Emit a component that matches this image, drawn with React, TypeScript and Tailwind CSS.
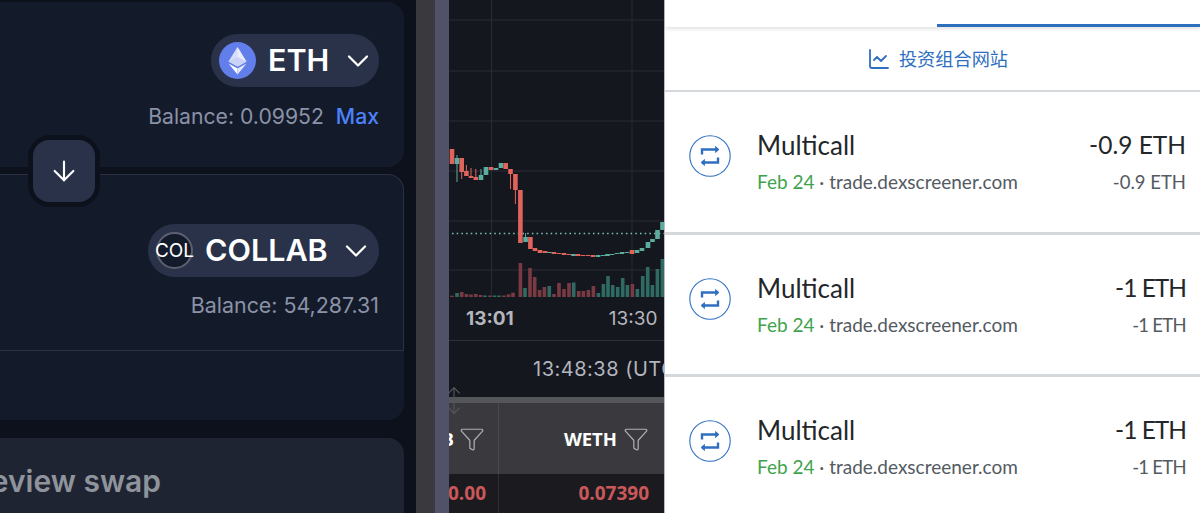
import React from 'react';
import { ArrowDown, ChevronDown, ChartLine, Filter, ArrowUp } from 'lucide-react';

// [x, bodyTop, bodyBottom, wickTop, wickBottom, up]
type Candle = [number, number, number, number | null, number | null, boolean];

const candles: Candle[] = [
  [3, 149, 164, null, null, false],
  [8, 158, 164, 155, 182, true],
  [12.7, 158, 172, null, 179, false],
  [17.4, 171, 176, 165, null, false],
  [22, 176, 178, 168, null, false],
  [26.8, 177, 180, 169, null, false],
  [32, 175, 180, 169, null, true],
  [37, 167, 175, null, null, true],
  [42, 167, 170, null, null, false],
  [47, 168, 170, null, null, true],
  [52, 163, 168, null, null, true],
  [56.7, 163, 169, null, null, false],
  [61.5, 169, 174, null, 189, false],
  [66.4, 174, 190, null, 204, false],
  [71.4, 190, 243, null, null, false],
  [76.6, 237, 242, 233, null, true],
  [81.4, 237, 249, null, null, false],
  [86, 248, 251, null, null, false],
  [91, 250, 253, null, null, false],
  [96, 251, 253, null, null, false],
  [100.5, 252, 253, null, null, true],
  [105, 252, 254, null, null, false],
  [110, 253, 254, null, null, false],
  [115, 253, 255, null, null, false],
  [120, 254, 255, null, null, false],
  [124.5, 254, 256, null, null, true],
  [129, 254, 256, null, null, false],
  [134, 255, 256, null, null, false],
  [139, 255, 256, null, null, false],
  [144, 255, 257, null, null, false],
  [149, 255, 257, null, null, true],
  [154, 255, 256, null, null, true],
  [158.5, 254, 256, null, null, true],
  [163, 254, 255, null, null, true],
  [168, 253, 254, null, null, true],
  [173, 252, 254, null, null, true],
  [178, 252, 253, null, null, true],
  [183, 250, 254, null, null, false],
  [188, 250, 253, null, null, true],
  [193, 248, 251, null, null, true],
  [199, 242, 248, null, null, true],
  [203.5, 239, 242, null, null, true],
  [208.5, 230, 239, null, null, true],
  [213.5, 222, 230, null, null, true],
];

// [x, height, up]
const volumes: [number, number, boolean][] = [
  [3, 1.3, false], [8, 4, true], [12.7, 5, false], [17.4, 3, false], [22, 2.5, false],
  [26.8, 3, false], [31.5, 2, false], [36, 1.5, true], [41, 1.5, false], [45.5, 1.5, true],
  [50, 1.5, true], [55, 1.5, false], [59.5, 2.7, false], [64, 4.3, false], [71.4, 34, false],
  [76, 9, true], [81, 29, false], [85.7, 20, false], [90.6, 7, false], [95.4, 10, false],
  [100.3, 11, true], [105, 3, false], [110, 14, false], [115, 8, false], [120, 14, false],
  [124.7, 14.5, true], [129.7, 6, false], [134.4, 6, false], [139.4, 7, false], [144.4, 11, false],
  [149.4, 4, true], [154.4, 13, true], [159, 21, true], [163.7, 12, true], [168.7, 10, true],
  [173.7, 19, true], [178.4, 12, true], [183.4, 13, false], [188.4, 8, true], [193.7, 21, true],
  [198.7, 30, true], [203.4, 12, true], [208.4, 28, true], [213.4, 38, true],
];

const rows = [
  { amount: '-0.9 ETH', big: 'tracking-normal', small: 'tracking-normal' },
  { amount: '-1 ETH', big: 'tracking-[-1px]', small: 'tracking-[-0.7px]' },
  { amount: '-1 ETH', big: 'tracking-[-1px]', small: 'tracking-[-0.7px]' },
];

const EthLogo = () => (
  <svg viewBox="0 0 37 37" className="w-[37px] h-[37px] shrink-0">
    <circle cx="18.5" cy="18.5" r="18.5" fill="#627EEA" />
    <polygon points="18.5,5 9.5,19.5 18.5,24.5 27.5,19.5" fill="#ffffff" fillOpacity="0.75" />
    <polygon points="18.5,5 18.5,24.5 27.5,19.5" fill="#ffffff" fillOpacity="0.45" />
    <polygon points="18.5,15 9.5,19.5 18.5,24.5 27.5,19.5" fill="#C9D2F7" />
    <polygon points="9.5,21.5 18.5,32.5 18.5,26.5" fill="#ffffff" />
    <polygon points="27.5,21.5 18.5,32.5 18.5,26.5" fill="#E4E8FB" />
  </svg>
);

const SwapIcon = () => (
  <svg viewBox="0 0 42 42" className="w-[42px] h-[42px] shrink-0" fill="none" stroke="#2F6FC0">
    <circle cx="21" cy="21" r="20.2" strokeWidth="1.1" />
    <path d="M13 19.5V14.5H29" strokeWidth="2.4" />
    <path d="M26.5 11.5L30 14.5L26.5 17.5Z" fill="#2F6FC0" strokeWidth="0.8" />
    <path d="M29 22.5V27.5H13" strokeWidth="2.4" />
    <path d="M15.5 24.5L12 27.5L15.5 30.5Z" fill="#2F6FC0" strokeWidth="0.8" />
  </svg>
);

const Chart = () => (
  <svg viewBox="0 0 215 300" className="block w-[215px] h-[300px] shrink-0">
    {[20, 71, 121, 171, 221, 270].map((y) => (
      <line key={y} x1="0" x2="215" y1={y} y2={y} stroke="#2A2B35" strokeWidth="1" />
    ))}
    {[42.5, 183].map((x) => (
      <line key={x} x1={x} x2={x} y1="0" y2="297" stroke="#2A2B35" strokeWidth="1" />
    ))}
    <line x1="3" x2="215" y1="233.5" y2="233.5" stroke="#7FC4B8" strokeWidth="1.4" strokeDasharray="1.5 3.2" />
    {volumes.map(([x, h, up]) => (
      <rect key={x} x={x - 1.8} y={297 - h} width="3.6" height={h} fill={up ? '#2F6B62' : '#7A3A42'} />
    ))}
    {candles.map(([x, top, bottom, wickTop, wickBottom, up]) => {
      const color = up ? '#5BAE9F' : '#E0645C';
      return (
        <g key={x}>
          {(wickTop !== null || wickBottom !== null) && (
            <line x1={x} x2={x} y1={wickTop ?? top} y2={wickBottom ?? bottom} stroke={color} strokeWidth="1" />
          )}
          <rect x={x - 2.3} y={top} width="4.6" height={bottom - top} fill={color} />
        </g>
      );
    })}
  </svg>
);

export default function App() {
  return (
    <div className="flex w-[1200px] h-[513px] overflow-hidden bg-white">
      {/* swap form */}
      <div className="w-[416px] h-full shrink-0 bg-[#0D111C] pt-[2px] pr-3 overflow-hidden relative font-['Inter',sans-serif]">
        <div className="h-[165px] rounded-r-2xl bg-[#131A2A] flex flex-col items-end pt-[32px] pr-[25px]">
          <div className="flex items-center w-[168px] h-[53px] rounded-full bg-[#293249] pl-2">
            <EthLogo />
            <span className="ml-3 text-[30.5px] leading-none font-semibold text-white">ETH</span>
            <ChevronDown className="ml-[11px] w-[36px] h-[36px] text-white" strokeWidth={1.5} />
          </div>
          <div className="mt-[16px] flex items-center text-[21.2px] leading-[26px] text-[#8B92A6]">
            <span>Balance: 0.09952</span>
            <span className="ml-3 font-medium text-[#4C82FB]">Max</span>
          </div>
        </div>

        <div className="mt-[7px] h-[246px] rounded-r-2xl bg-[#131A2A]">
          <div className="h-[177px] flex flex-col items-end pt-[49px] pr-[24px] border-t border-r border-b border-[#2B3144] rounded-tr-2xl">
            <div className="flex items-center w-[231px] h-[53px] rounded-full bg-[#293249] pl-2">
              <div className="relative w-[37px] h-[37px] shrink-0 rounded-full bg-[#131A2A] border-2 border-[#5D6070] flex items-center justify-center">
                <span className="text-[19px] leading-none text-white">COL</span>
              </div>
              <span className="ml-3 text-[30.5px] leading-none font-semibold text-white">COLLAB</span>
              <ChevronDown className="ml-[10px] w-[36px] h-[36px] text-white" strokeWidth={1.5} />
            </div>
            <div className="mt-[15px] text-[21.4px] leading-[26px] text-[#8B92A6]">Balance: 54,287.31</div>
          </div>
        </div>

        <div className="mt-[18px] h-[100px] rounded-r-2xl bg-[#1F2433] flex items-start justify-end pr-[243px] pt-[23px]">
          <span className="shrink-0 text-[30px] leading-[40px] font-semibold text-[#8F949C]">Preview swap</span>
        </div>

        {/* flip button */}
        <div className="absolute left-[28px] top-[135px] w-[72px] h-[72px] rounded-[22px] bg-[#0D111C] flex items-center justify-center">
          <div className="w-[62px] h-[62px] rounded-[16px] bg-[#293249] flex items-center justify-center">
            <ArrowDown className="w-[32px] h-[32px] text-white" strokeWidth={1.6} />
          </div>
        </div>
      </div>

      {/* window edge */}
      <div className="w-[19px] h-full shrink-0 bg-[#3A3A3E]" />
      <div className="w-[14px] h-full shrink-0 bg-[#4F5268]" />

      {/* dexscreener chart */}
      <div className="w-[215px] h-full shrink-0 bg-[#15171F] relative overflow-hidden flex flex-col font-['Inter',sans-serif]">
        <Chart />
        <div className="h-[41px] shrink-0 flex items-center pl-[17px] pb-[2px] gap-[95px] border-b border-[#2F3038] text-[#B4B6BC] text-[19px]">
          <span className="font-bold">13:01</span>
          <span>13:30</span>
        </div>
        <div className="h-[56px] shrink-0 flex items-center pl-[84px] whitespace-nowrap text-[20px] tracking-[0.5px] text-[#B2B5BE]">
          13:48:38 (UTC
        </div>
        <div className="h-[6px] shrink-0 bg-[#55565A]" />
        <div className="h-[71px] shrink-0 flex bg-[#3A3A3E] font-['Open_Sans',sans-serif] font-bold text-[18.5px] text-white">
          <div className="w-[50px] shrink-0 flex items-center justify-end gap-[5px] pr-[13px] border-r border-[#4A4A4E] overflow-hidden">
            <span className="shrink-0">B</span>
            <Filter className="w-[26px] h-[26px] shrink-0 text-[#AEAEB2]" strokeWidth={1.15} />
          </div>
          <div className="flex-1 flex items-center justify-end gap-[6px] pr-[15px]">
            <span>WETH</span>
            <Filter className="w-[26px] h-[26px] shrink-0 text-[#AEAEB2]" strokeWidth={1.15} />
          </div>
        </div>
        <div className="flex-1 flex bg-[#1B1B1F] font-['Open_Sans',sans-serif] font-bold text-[19px] text-[#C9585A]">
          <div className="w-[50px] shrink-0 flex items-center justify-end pr-[12px] border-r border-[#2F2F33] overflow-hidden">
            <span className="shrink-0">10.00</span>
          </div>
          <div className="flex-1 flex items-center justify-end pr-[15px]">0.07390</div>
        </div>

        {/* row resize handle */}
        <div className="absolute left-[-5px] top-[384px] flex flex-col items-center text-[#55565A]">
          <ArrowUp className="w-[20px] h-[18px]" strokeWidth={1.5} />
          <ArrowDown className="w-[20px] h-[18px] -mt-[3px]" strokeWidth={1.5} />
        </div>
      </div>

      {/* wallet activity */}
      <div className="flex-1 h-full border-l border-[#B9B9CC] bg-white flex flex-col font-['Lato',sans-serif]">
        <div className="h-[27px] shrink-0 flex justify-end shadow-[0_2px_4px_rgba(0,0,0,0.12)]">
          <div className="w-[263px] h-[3px] mt-[24px] bg-[#2F6FC0]" />
        </div>
        <div className="h-[65px] shrink-0 flex items-center justify-center pl-[10px] gap-[8px] border-b-2 border-[#D6D9DC] text-[#2F6FC0]">
          <ChartLine className="w-[24px] h-[24px]" strokeWidth={1.8} />
          <span className="text-[18.2px] font-['Noto_Sans_CJK_SC',sans-serif]">投资组合网站</span>
        </div>
        {rows.map((row, i) => (
          <div key={i} className="h-[142.5px] shrink-0 flex items-start pl-[24px] pr-[14px] border-b-[3px] border-[#D6D9DC]">
            <div className="pt-[43px]">
              <SwapIcon />
            </div>
            <div className="pt-[37px] ml-[26px] flex-1">
              <div className="text-[26px] leading-[32px] text-[#24272A]">Multicall</div>
              <div className="mt-[9px] text-[19px] leading-[24px] text-[#535A61]">
                <span className="text-[#3FA34D]">Feb 24</span>
                <span> · trade.dexscreener.com</span>
              </div>
            </div>
            <div className="pt-[37px] text-right">
              <div className={`text-[24.5px] leading-[32px] text-[#24272A] ${row.big}`}>{row.amount}</div>
              <div className={`mt-[9px] text-[18.5px] leading-[24px] text-[#535A61] ${row.small}`}>{row.amount}</div>
            </div>
          </div>
        ))}
      </div>
    </div>
  );
}
